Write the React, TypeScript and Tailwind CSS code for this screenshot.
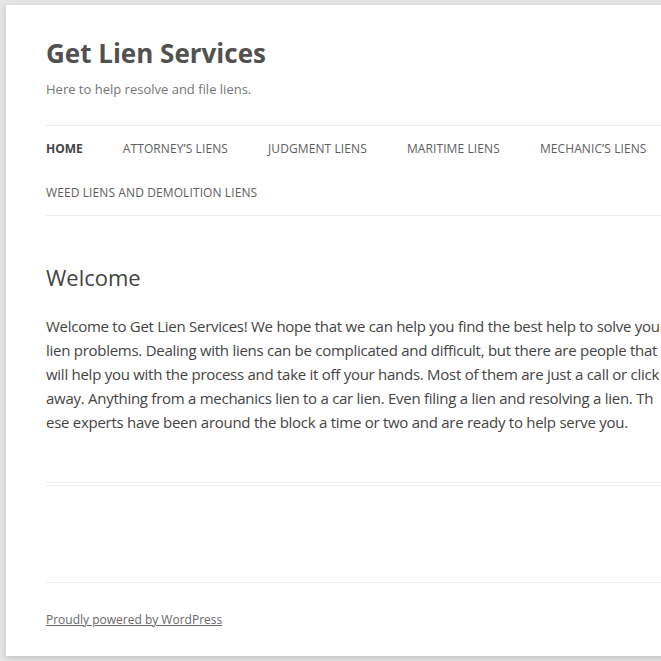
const navItems = [
  "Attorney’s Liens",
  "Judgment Liens",
  "Maritime Liens",
  "Mechanic’s Liens",
  "Weed Liens and Demolition Liens",
];

const lines = [
  "Welcome to Get Lien Services! We hope that we can help you find the best help to solve your",
  "lien problems. Dealing with liens can be complicated and difficult, but there are people that",
  "will help you with the process and take it off your hands. Most of them are just a call or click",
  "away. Anything from a mechanics lien to a car lien. Even filing a lien and resolving a lien. Th",
  "ese experts have been around the block a time or two and are ready to help serve you.",
];

export default function App() {
  return (
    <div
      className="h-[661px] w-full overflow-hidden bg-[#e6e6e6] pl-[6px] pt-[5px]"
      style={{ fontFamily: '"Open Sans", "Liberation Sans", sans-serif' }}
    >
      <div className="w-[960px] bg-white px-10 shadow-[0_2px_6px_rgba(100,100,100,0.3)]">
        <header className="pt-6">
          <h1 className="text-[26px] font-bold leading-[48px] text-[#515151]">
            Get Lien Services
          </h1>
          <h2 className="text-[13px] leading-6 text-[#757575]">
            Here to help resolve and file liens.
          </h2>
        </header>

        <nav className="mt-6 w-[900px] border-y border-[#ededed]">
          <ul className="flex w-[640px] flex-wrap gap-x-10 pt-px text-[12px] uppercase leading-[44px] tracking-[0.1px] text-[#5e5e5e]">
            <li className="font-bold tracking-normal text-[#444]">Home</li>
            {navItems.map((item) => (
              <li key={item}>{item}</li>
            ))}
          </ul>
        </nav>

        <article className="mt-[48px] border-b-4 border-double border-[#ededed] pb-12">
          <h1 className="text-[22px] leading-[26px] text-[#444]">Welcome</h1>
          <div className="mt-6 text-[15px] leading-6 tracking-[-0.27px] text-[#444]">
            {lines.map((line) => (
              <div key={line} className="whitespace-nowrap">
                {line}
              </div>
            ))}
          </div>
        </article>

        <footer className="mt-24 border-t border-[#ededed] pb-6 pt-[25px] text-[12px] leading-6">
          <a href="#" className="text-[#686868] underline">
            Proudly powered by WordPress
          </a>
        </footer>
      </div>
    </div>
  );
}
